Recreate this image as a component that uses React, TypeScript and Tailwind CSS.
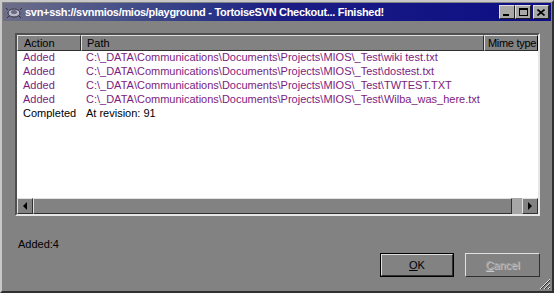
const ROWS = [
  { action: "Added", path: "C:\\_DATA\\Communications\\Documents\\Projects\\MIOS\\_Test\\wiki test.txt", added: true },
  { action: "Added", path: "C:\\_DATA\\Communications\\Documents\\Projects\\MIOS\\_Test\\dostest.txt", added: true },
  { action: "Added", path: "C:\\_DATA\\Communications\\Documents\\Projects\\MIOS\\_Test\\TWTEST.TXT", added: true },
  { action: "Added", path: "C:\\_DATA\\Communications\\Documents\\Projects\\MIOS\\_Test\\Wilba_was_here.txt", added: true },
  { action: "Completed", path: "At revision: 91", added: false },
];

function CaptionButton({ children }: { children: React.ReactNode }) {
  return (
    <div className="w-[16px] h-[14px] bg-[#a8a8a8] border border-t-[#e0e0e0] border-l-[#e0e0e0] border-r-[#202020] border-b-[#202020] flex items-center justify-center">
      {children}
    </div>
  );
}

export default function App() {
  return (
    <div
      className="w-[554px] h-[293px] bg-[#828282] border-2 border-t-[#c8c8c8] border-l-[#c8c8c8] border-r-[#303030] border-b-[#303030] flex flex-col text-[11px] leading-none"
      style={{ fontFamily: "'Liberation Sans', Arial, sans-serif" }}
    >
      {/* title bar */}
      <div className="mx-[1px] mt-[1px] h-[18px] flex items-center pl-[3px] pr-[2px] bg-gradient-to-r from-[#6e6e88] via-[#1c1c84] to-[#0c0c84]">
        <svg width="16" height="12" viewBox="0 0 16 12" className="mr-[3px]">
          <ellipse cx="8" cy="7" rx="6" ry="4" fill="#b8b8c8" stroke="#303040" strokeWidth="1" />
          <ellipse cx="8" cy="6" rx="3" ry="2" fill="#6a6a80" />
          <path d="M2 4 L0 2 M14 4 L16 2 M3 10 L1 12 M13 10 L15 12" stroke="#303040" strokeWidth="1" />
        </svg>
        <span className="text-white font-bold text-[11px] tracking-[-0.3px] whitespace-nowrap">
          svn+ssh://svnmios/mios/playground - TortoiseSVN Checkout... Finished!
        </span>
        <div className="ml-auto flex items-center">
          <CaptionButton>
            <div className="w-[6px] h-[2px] bg-black mt-[6px] -ml-[2px]" />
          </CaptionButton>
          <CaptionButton>
            <div className="w-[9px] h-[8px] border border-black border-t-2" />
          </CaptionButton>
          <div className="w-[2px]" />
          <CaptionButton>
            <svg width="8" height="7" viewBox="0 0 8 7">
              <path d="M0.5 0.5 L7.5 6.5 M7.5 0.5 L0.5 6.5" stroke="black" strokeWidth="1.6" />
            </svg>
          </CaptionButton>
        </div>
      </div>

      {/* list view */}
      <div className="ml-[13px] mr-[12px] mt-[12px] h-[183px] border-2 border-t-[#505050] border-l-[#505050] border-r-[#e6e6e6] border-b-[#e6e6e6] bg-white flex flex-col">
        <div className="h-[16px] flex bg-[#828282] text-black">
          <div className="w-[64px] border border-t-[#e0e0e0] border-l-[#e0e0e0] border-r-[#303030] border-b-[#303030] pl-[6px] flex items-center">Action</div>
          <div className="w-[403px] border border-t-[#e0e0e0] border-l-[#e0e0e0] border-r-[#303030] border-b-[#303030] pl-[5px] flex items-center">Path</div>
          <div className="flex-1 border border-t-[#e0e0e0] border-l-[#e0e0e0] border-b-[#303030] pl-[3px] flex items-center whitespace-nowrap overflow-hidden tracking-[-0.3px]">Mime type</div>
        </div>
        <div className="flex-1 -mt-[1px]">
          {ROWS.map((r, i) => (
            <div key={i} className={`h-[14px] flex items-center whitespace-nowrap ${r.added ? "text-[#7c1c80]" : "text-black"}`}>
              <div className="w-[64px] pl-[6px]">{r.action}</div>
              <div className="pl-[5px]">{r.path}</div>
            </div>
          ))}
        </div>
        {/* horizontal scrollbar */}
        <div className="h-[16px] flex bg-[#a6a6a6]">
          <div className="w-[16px] bg-[#828282] border border-t-[#e0e0e0] border-l-[#e0e0e0] border-r-[#303030] border-b-[#303030] flex items-center justify-center">
            <div className="w-0 h-0 border-y-[4px] border-y-transparent border-r-[4px] border-r-black" />
          </div>
          <div className="w-[479px] bg-[#828282] border border-t-[#e0e0e0] border-l-[#e0e0e0] border-r-[#303030] border-b-[#303030]" />
          <div className="flex-1" />
          <div className="w-[16px] bg-[#828282] border border-t-[#e0e0e0] border-l-[#e0e0e0] border-r-[#303030] border-b-[#303030] flex items-center justify-center">
            <div className="w-0 h-0 border-y-[4px] border-y-transparent border-l-[4px] border-l-black" />
          </div>
        </div>
      </div>

      {/* bottom area */}
      <div className="flex-1 relative">
        <div className="absolute left-[16px] top-[23px] text-black">Added:4</div>
        <div className="absolute right-[12px] bottom-[14px] flex gap-[11px]">
          <div className="w-[74px] h-[24px] border border-black">
            <div className="w-full h-full border border-t-[#e0e0e0] border-l-[#e0e0e0] border-r-[#303030] border-b-[#303030] flex items-center justify-center text-black">
              <span><span className="underline">O</span>K</span>
            </div>
          </div>
          <div className="w-[75px] h-[24px] border border-t-[#e0e0e0] border-l-[#e0e0e0] border-r-[#303030] border-b-[#303030] flex items-center justify-center">
            <span className="text-[#a0a0a0]" style={{ textShadow: "1px 1px 0 #c8c8c8" }}>
              <span className="underline">C</span>ancel
            </span>
          </div>
        </div>
        <svg width="12" height="12" viewBox="0 0 12 12" className="absolute right-[1px] bottom-[1px]">
          <path d="M11 1 L1 11 M11 5 L5 11 M11 9 L9 11" stroke="#e0e0e0" strokeWidth="1" />
          <path d="M11 2 L2 11 M11 6 L6 11 M11 10 L10 11" stroke="#303030" strokeWidth="1" />
        </svg>
      </div>
    </div>
  );
}
